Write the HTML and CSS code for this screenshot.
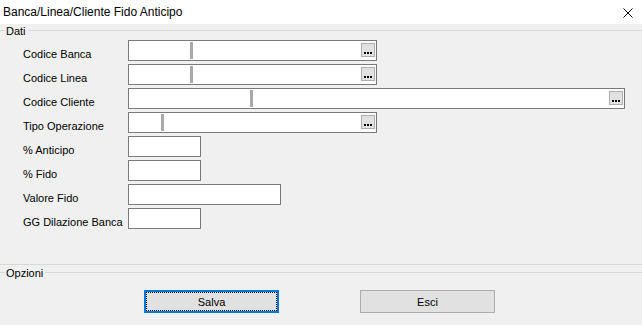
FILE: index.html
```html
<!DOCTYPE html>
<html lang="it">
<head>
    <meta charset="UTF-8">
    <meta name="viewport" content="width=device-width, initial-scale=1.0">
    <title>Banca/Linea/Cliente Fido Anticipo</title>
    <link rel="stylesheet" href="styles.css">
</head>
<body>
    <div class="window">
        <div class="titlebar">
            <span class="title">Banca/Linea/Cliente Fido Anticipo</span>
            <svg class="close" xmlns="http://www.w3.org/2000/svg" width="10" height="10" viewBox="0 0 10 10">
                <path d="M0.5 0.5 L9.5 9.5 M9.5 0.5 L0.5 9.5" stroke="#000" stroke-width="1" fill="none"/>
            </svg>
        </div>

        <section class="group dati">
            <div class="legend"><span>Dati</span></div>

            <div class="rows">
                <div class="row">
                    <label>Codice Banca</label>
                    <div class="lookup lookup-short">
                        <span class="code code-banca"></span>
                        <span class="split"></span>
                        <span class="desc"></span>
                        <button class="dots" type="button" aria-label="..."></button>
                    </div>
                </div>
                <div class="row">
                    <label>Codice Linea</label>
                    <div class="lookup lookup-short">
                        <span class="code code-banca"></span>
                        <span class="split"></span>
                        <span class="desc"></span>
                        <button class="dots" type="button" aria-label="..."></button>
                    </div>
                </div>
                <div class="row">
                    <label>Codice Cliente</label>
                    <div class="lookup lookup-long">
                        <span class="code code-cliente"></span>
                        <span class="split"></span>
                        <span class="desc"></span>
                        <button class="dots" type="button" aria-label="..."></button>
                    </div>
                </div>
                <div class="row">
                    <label>Tipo Operazione</label>
                    <div class="lookup lookup-short">
                        <span class="code code-tipo"></span>
                        <span class="split"></span>
                        <span class="desc"></span>
                        <button class="dots" type="button" aria-label="..."></button>
                    </div>
                </div>
                <div class="row">
                    <label>% Anticipo</label>
                    <input class="field field-small" type="text">
                </div>
                <div class="row">
                    <label>% Fido</label>
                    <input class="field field-small" type="text">
                </div>
                <div class="row">
                    <label>Valore Fido</label>
                    <input class="field field-medium" type="text">
                </div>
                <div class="row">
                    <label>GG Dilazione Banca</label>
                    <input class="field field-small" type="text">
                </div>
            </div>
        </section>

        <section class="group opzioni">
            <div class="legend"><span>Opzioni</span></div>
            <div class="actions">
                <button class="btn btn-default" type="button">Salva</button>
                <button class="btn" type="button">Esci</button>
            </div>
        </section>
    </div>
</body>
</html>
```

FILE: styles.css
```css
:root {
    --bg: #f0f0f0;
    --line: #d9d9d9;
    --edit-border: #7a7a7a;
    --btn-bg: #e1e1e1;
    --btn-border: #adadad;
    --focus: #0078d7;
}

* {
    margin: 0;
    padding: 0;
    box-sizing: border-box;
    font-family: "Liberation Sans", Arial, sans-serif;
}

body {
    background-color: var(--bg);
    color: #000;
    font-size: 11px;
}

.window {
    width: 642px;
    height: 325px;
    overflow: hidden;
}

.titlebar {
    display: flex;
    align-items: center;
    height: 24px;
    background-color: #fff;
    padding-left: 3px;
}

.title {
    flex: 1;
    font-size: 12px;
    line-height: 24px;
}

.close {
    margin-right: 9px;
    margin-top: 2px;
}

/* group boxes: line with the caption sitting on it */
.legend {
    display: flex;
    align-items: flex-start;
    height: 13px;
    line-height: 13px;
}

.legend::before,
.legend::after {
    content: "";
    height: 1px;
    margin-top: 5px;
    background-color: var(--line);
}

.legend::before {
    width: 5px;
}

.legend::after {
    flex: 1;
}

.legend span {
    padding: 0 2px 0 1px;
}

.dati {
    margin-top: 1px;
    padding-bottom: 35px;
    border-bottom: 1px solid var(--line);
}

.rows {
    display: flex;
    flex-direction: column;
    gap: 3px;
    margin-top: 2px;
    padding-left: 23px;
}

.row {
    display: flex;
    align-items: flex-start;
    height: 21px;
}

.row label {
    width: 105px;
    height: 21px;
    padding-top: 7px;
    line-height: 14px;
}

/* lookup fields: code | description | ... */
.lookup {
    display: flex;
    height: 21px;
    background-color: #fff;
    border: 1px solid var(--edit-border);
}

.lookup-short {
    width: 249px;
}

.lookup-long {
    width: 497px;
}

.code-banca {
    width: 61px;
}

.code-cliente {
    width: 121px;
}

.code-tipo {
    width: 32px;
}

.split {
    width: 3px;
    margin: 1px 0;
    background-color: #a9a9a9;
}

.desc {
    flex: 1;
}

.dots {
    position: relative;
    width: 14px;
    height: 14px;
    margin: 2px 1px 0 0;
    background-color: var(--btn-bg);
    border: 1px solid var(--btn-border);
}

.dots::after {
    content: "";
    position: absolute;
    left: 2px;
    top: 8px;
    width: 2px;
    height: 2px;
    background-color: #000;
    box-shadow: 3px 0 0 #000, 6px 0 0 #000;
}

.field {
    height: 21px;
    background-color: #fff;
    border: 1px solid var(--edit-border);
    outline: none;
}

.field-small {
    width: 73px;
}

.field-medium {
    width: 153px;
}

.opzioni {
    margin-top: 2px;
}

.actions {
    display: flex;
    gap: 81px;
    margin-top: 10px;
    padding-left: 144px;
}

.btn {
    width: 135px;
    height: 23px;
    background-color: var(--btn-bg);
    border: 1px solid var(--btn-border);
    font-size: 11px;
    color: #000;
}

.btn-default {
    border: 2px solid var(--focus);
    outline: 1px dotted #000;
    outline-offset: -3px;
}
```
